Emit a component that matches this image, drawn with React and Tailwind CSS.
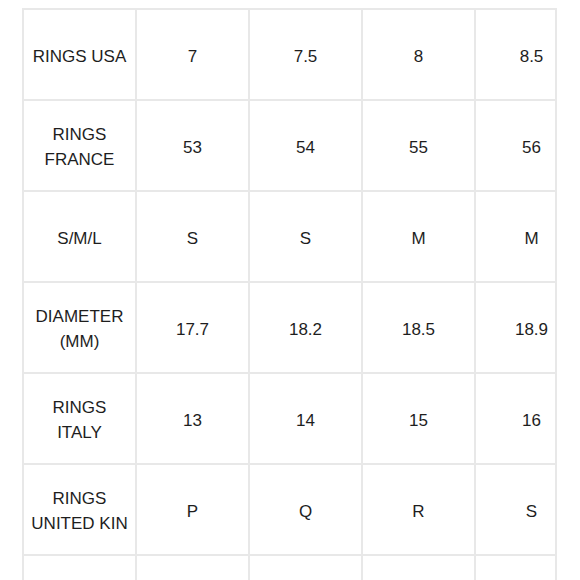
const rows = [
  ['RINGS USA', '7', '7.5', '8', '8.5'],
  ['RINGS FRANCE', '53', '54', '55', '56'],
  ['S/M/L', 'S', 'S', 'M', 'M'],
  ['DIAMETER (MM)', '17.7', '18.2', '18.5', '18.9'],
  ['RINGS ITALY', '13', '14', '15', '16'],
  ['RINGS UNITED KIN', 'P', 'Q', 'R', 'S'],
  ['', '', '', '', ''],
];

export default function App() {
  return (
    <div className="h-[580px] w-[580px] overflow-hidden bg-white pt-[8px] pl-[22px] font-['Liberation_Sans',Arial,sans-serif] text-[17px] leading-[25px] text-[#1e1e1e]">
      <div className="w-[535px] overflow-hidden border-x-2 border-t-2 border-[#e8e8e8]">
        {rows.map((row, i) => (
          <div key={i} className="flex">
            {row.map((cell, j) => (
              <div
                key={j}
                className="flex h-[91px] w-[113px] shrink-0 items-center justify-center overflow-hidden border-r-2 border-b-2 border-[#e8e8e8] px-[5px] pt-[3px] text-center"
              >
                {cell}
              </div>
            ))}
          </div>
        ))}
      </div>
    </div>
  );
}
